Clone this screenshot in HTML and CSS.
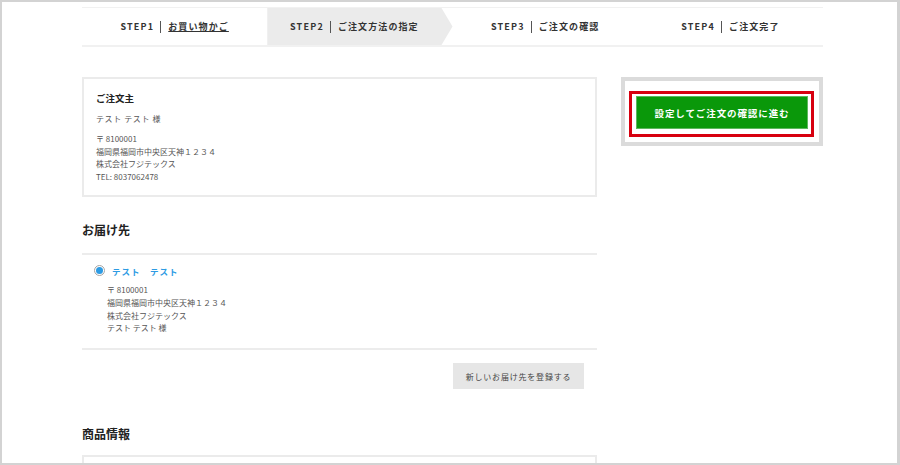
FILE: index.html
```html
<!DOCTYPE html>
<html lang="ja">
<head>
<meta charset="utf-8">
<link rel="stylesheet" href="styles.css">
</head>
<body>
<div class="frame">
  <div class="wrap">
    <ol class="steps">
      <li class="step"><span class="num">STEP1</span><span class="sep"></span><a class="link">お買い物かご</a></li>
      <li class="step active"><span class="num">STEP2</span><span class="sep"></span><span>ご注文方法の指定</span></li>
      <li class="step"><span class="num">STEP3</span><span class="sep"></span><span>ご注文の確認</span></li>
      <li class="step"><span class="num">STEP4</span><span class="sep"></span><span>ご注文完了</span></li>
    </ol>
    <div class="main">
      <div class="left">
        <div class="card">
          <div class="card-title">ご注文主</div>
          <div class="line name">テスト テスト 様</div>
          <div class="addr">
            <div class="line">〒 8100001</div>
            <div class="line">福岡県福岡市中央区天神１２３４</div>
            <div class="line">株式会社フジテックス</div>
            <div class="line">TEL: 8037062478</div>
          </div>
        </div>

        <h2 class="heading first">お届け先</h2>
        <div class="dest">
          <div class="radio-row">
            <span class="radio"><span class="dot"></span></span>
            <span class="dest-name">テスト　テスト</span>
          </div>
          <div class="dest-addr">
            <div class="line">〒 8100001</div>
            <div class="line">福岡県福岡市中央区天神１２３４</div>
            <div class="line">株式会社フジテックス</div>
            <div class="line">テスト テスト 様</div>
          </div>
        </div>
        <div class="btn-row">
          <button class="btn-sub">新しいお届け先を登録する</button>
        </div>

        <h2 class="heading second">商品情報</h2>
        <div class="card items"></div>
      </div>
      <div class="right">
        <div class="cta-box">
          <div class="highlight">
            <button class="btn-go">設定してご注文の確認に進む</button>
          </div>
        </div>
      </div>
    </div>
  </div>
</div>
</body>
</html>
```

FILE: styles.css
```css
* { box-sizing: border-box; }
html, body { margin: 0; padding: 0; background: #fff; }
body {
  font-family: "Noto Sans CJK JP", "Noto Sans", sans-serif;
  color: #333;
}
.frame {
  width: 900px;
  height: 465px;
  border-style: solid;
  border-color: #d3d3d3;
  border-width: 2px 3px 2px 2px;
  overflow: hidden;
}
.wrap {
  width: 741px;
  margin-left: 80px;
  padding-top: 5px;
}
.steps {
  list-style: none;
  margin: 0;
  padding: 0;
  display: grid;
  grid-template-columns: repeat(4, 1fr);
  border-top: 1px solid #f1f1f1;
  border-bottom: 2px solid #f1f1f1;
  height: 40px;
}
.step {
  display: flex;
  align-items: center;
  justify-content: center;
  font-size: 9px;
  font-weight: bold;
  letter-spacing: 1.1px;
  color: #333;
  line-height: 12px;
}
.step .num { letter-spacing: 1.2px; }
.step .sep {
  display: inline-block;
  width: 1px;
  height: 12px;
  background: #555;
  margin: 0 7px 0 6px;
}
.step .link { text-decoration: underline; }
.step.active {
  background: #ebebeb;
  padding-right: 11px;
  clip-path: polygon(0 0, calc(100% - 11px) 0, 100% 50%, calc(100% - 11px) 100%, 0 100%);
}
.main {
  display: flex;
  gap: 24px;
  margin-top: 30px;
}
.left { width: 515px; }
.right { width: 202px; }
.card {
  border: 2px solid #ebebeb;
  padding: 13px 12px 11px;
}
.card-title {
  font-size: 9.5px;
  font-weight: bold;
  line-height: 12px;
  color: #222;
}
.line {
  font-size: 8px;
  line-height: 12.8px;
  color: #555;
}
.name { margin-top: 9px; letter-spacing: 0.6px; }
.addr { margin-top: 7px; }
.heading {
  margin: 0;
  font-size: 12px;
  line-height: 16px;
  font-weight: bold;
  color: #222;
}
.heading.first { margin-top: 25px; padding-bottom: 15px; }
.dest {
  border-top: 2px solid #ececec;
  border-bottom: 2px solid #ececec;
  padding: 9px 0 13px 12px;
}
.radio-row {
  display: flex;
  align-items: center;
  height: 14px;
}
.radio {
  width: 11px;
  height: 11px;
  border: 1px solid #a5a5a5;
  border-radius: 50%;
  display: flex;
  align-items: center;
  justify-content: center;
  margin-right: 7px;
}
.dot {
  width: 7px;
  height: 7px;
  border-radius: 50%;
  background: #2d9be3;
}
.dest-name {
  font-size: 8.5px;
  font-weight: bold;
  color: #2d9be3;
  letter-spacing: 1px;
}
.dest-addr { margin-top: 6px; padding-left: 13px; }
.btn-row {
  display: flex;
  justify-content: flex-end;
  padding-right: 13px;
  margin-top: 13px;
}
.btn-sub {
  width: 131px;
  height: 26px;
  border: none;
  background: #e6e6e6;
  font-family: inherit;
  font-size: 8px;
  letter-spacing: 0.8px;
  color: #444;
  padding: 0;
}
.heading.second { margin-top: 37px; margin-bottom: 13px; }
.items { height: 40px; padding: 0; }
.cta-box {
  border: 4px solid #dbdbdb;
  padding: 10px 5px 5px 4px;
}
.highlight {
  border: 3px solid #d7000f;
  padding: 2px 3px 5px 4px;
}
.btn-go {
  display: block;
  width: 100%;
  height: 33px;
  background: #0a980a;
  border: 1px solid #5db85d;
  color: #fff;
  font-family: inherit;
  font-size: 9.5px;
  font-weight: bold;
  letter-spacing: 0.9px;
  padding: 0;
}
```
